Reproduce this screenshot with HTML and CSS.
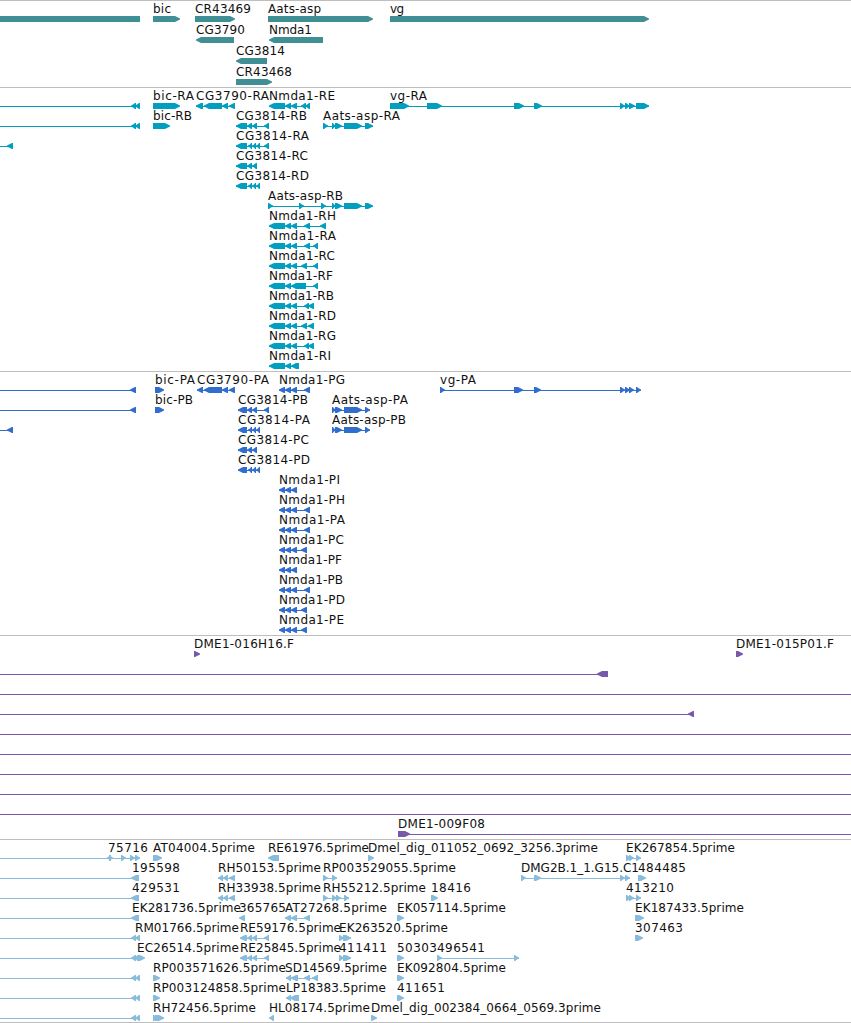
FILE: index.html
```html
<!DOCTYPE html>
<html lang="en">
  <head>
    <meta charset="utf-8">
    <title>Genome tracks</title>
    <link rel="stylesheet" href="styles.css">
  </head>
  <body>
    <div class="browser">
      <section class="track genes" id="genes"></section>
      <section class="track transcripts" id="transcripts"></section>
      <section class="track proteins" id="proteins"></section>
      <section class="track bacs" id="bacs"></section>
      <section class="track ests" id="ests"></section>
    </div>
    <script src="tracks.js"></script>
  </body>
</html>
```
FILE: styles.css
```css
body {
  margin: 0;
  background-color: #ffffff;
}

.browser {
  width: 851px;
  height: 1023px;
  overflow: hidden;
  border-bottom: 1px solid #bebebe;
  box-sizing: border-box;
}

.track {
  border-top: 1px solid #bebebe;
  padding-bottom: 3px;
}

.genes {
  color: #3f8f94;
  padding-bottom: 2px;
}

.transcripts {
  color: #009fbf;
}

.proteins {
  color: #306dcc;
}

.bacs {
  color: #7858a8;
}

.ests {
  color: #88bcdd;
}

.row {
  display: block;
  width: 851px;
  height: 20px;
  overflow: visible;
}

.genes .row {
  height: 21px;
}

.label {
  font-family: "DejaVu Sans", sans-serif;
  font-size: 12px;
  fill: #111111;
}

.exon,
.intron {
  fill: currentColor;
}

.intron {
  shape-rendering: crispEdges;
}
```
FILE: tracks.js
```js
const SVG = "http://www.w3.org/2000/svg";

// exon groups shared by several features
const introns = [[131, 136], [135, 140]];
const cg3790 = [[204, 222], [222, 228], [229, 235]];
const aats = [[332, 336], [335, 342], [344, 362], [365, 373]];
const aatsP = [[332, 336], [335, 342], [344, 362], [365, 370]];
const nmda = [[269, 285], [285, 291], [291, 297]];
const nmdaP = [[279, 285], [285, 291], [291, 297]];
const cgRA = [[236, 247], [248, 252], [252, 256], [256, 260]];
const cgRC = [[236, 247], [247, 252], [252, 257]];
const cgPA = [[238, 247], [248, 252], [252, 256], [256, 260]];
const cgPC = [[238, 247], [247, 252], [252, 257]];
const rh = [[218, 223], [223, 228], [229, 235]];
const re = [[240, 247], [247, 252], [252, 257], [264, 269]];
const ek = [[626, 631], [629, 634], [636, 641]];

// feature: [label, label start, label end, direction, exons, line start, line end]
const tracks = {
  genes: [
    [
      ["", 0, 0, "none", [[0, 140]]],
      ["bic", 153, 171, ">", [[153, 180]]],
      ["CR43469", 195, 251, ">", [[195, 235]]],
      ["Aats-asp", 268, 321, ">", [[268, 373]]],
      ["vg", 390, 404, ">", [[390, 649]]]
    ],
    [
      ["CG3790", 196, 245, "<", [[196, 234]]],
      ["Nmda1", 269, 312, "<", [[269, 323]]]
    ],
    [["CG3814", 236, 285, "<", [[236, 267]]]],
    [["CR43468", 236, 292, ">", [[236, 272]]]]
  ],
  transcripts: [
    [
      ["", 0, 0, "<", introns, 0, 140],
      ["bic-RA", 153, 194, ">", [[153, 180]]],
      ["CG3790-RA", 196, 269, "<", [[196, 203], ...cg3790]],
      ["Nmda1-RE", 269, 335, "<", [...nmda, [301, 306], [305, 310]]],
      ["vg-RA", 390, 427, ">", [[390, 409], [427, 442], [514, 524], [534, 542], [620, 625], [625, 630], [629, 635], [636, 649]]]
    ],
    [
      ["", 0, 0, "<", introns, 0, 140],
      ["bic-RB", 153, 192, ">", [[153, 170]]],
      ["CG3814-RB", 236, 307, "<", [...cgRC, [264, 269]]],
      ["Aats-asp-RA", 323, 400, ">", [[323, 328], ...aats]]
    ],
    [
      ["", 0, 0, "<", [[7, 13]], 0, 13],
      ["CG3814-RA", 236, 309, "<", [...cgRA, [264, 269]]]
    ],
    [["CG3814-RC", 236, 308, "<", cgRC]],
    [["CG3814-RD", 236, 309, "<", cgRA]],
    [["Aats-asp-RB", 268, 343, ">", [[268, 273], [299, 304], [321, 326], ...aats]]],
    [["Nmda1-RH", 269, 336, "<", [...nmda, [304, 310], [320, 326]]]],
    [["Nmda1-RA", 269, 336, "<", [...nmda, [304, 310], [313, 318]]]],
    [["Nmda1-RC", 269, 335, "<", [...nmda, [301, 307], [313, 318]]]],
    [["Nmda1-RF", 269, 333, "<", [[269, 285], [285, 291], [291, 306], [313, 318]]]],
    [["Nmda1-RB", 269, 334, "<", [...nmda, [304, 309], [308, 314]]]],
    [["Nmda1-RD", 269, 336, "<", [...nmda, [301, 307], [308, 314]]]],
    [["Nmda1-RG", 269, 336, "<", [...nmda, [304, 309], [308, 314]]]],
    [["Nmda1-RI", 269, 331, "<", [[269, 285], [285, 291], [291, 299]]]]
  ],
  proteins: [
    [
      ["", 0, 0, "<", [[130, 136]], 0, 136],
      ["bic-PA", 155, 195, ">", [[155, 164]]],
      ["CG3790-PA", 197, 269, "<", [[197, 203], ...cg3790]],
      ["Nmda1-PG", 279, 345, "<", [...nmdaP, [304, 310]]],
      ["vg-PA", 440, 476, ">", [[440, 445], [514, 523], [534, 541], [620, 625], [625, 630], [629, 634], [636, 641]]]
    ],
    [
      ["", 0, 0, "<", [[130, 136]], 0, 136],
      ["bic-PB", 155, 193, ">", [[155, 164]]],
      ["CG3814-PB", 238, 308, "<", [...cgPC, [264, 269]]],
      ["Aats-asp-PA", 332, 408, ">", aatsP]
    ],
    [
      ["", 0, 0, "<", [[7, 13]], 0, 13],
      ["CG3814-PA", 238, 310, "<", cgPA],
      ["Aats-asp-PB", 332, 406, ">", aatsP]
    ],
    [["CG3814-PC", 238, 309, "<", cgPC]],
    [["CG3814-PD", 238, 310, "<", cgPA]],
    [["Nmda1-PI", 279, 340, "<", nmdaP]],
    [["Nmda1-PH", 279, 345, "<", [...nmdaP, [304, 310]]]],
    [["Nmda1-PA", 279, 345, "<", [...nmdaP, [304, 310]]]],
    [["Nmda1-PC", 279, 344, "<", [...nmdaP, [301, 307]]]],
    [["Nmda1-PF", 279, 342, "<", nmdaP]],
    [["Nmda1-PB", 279, 343, "<", [...nmdaP, [304, 310]]]],
    [["Nmda1-PD", 279, 345, "<", [...nmdaP, [301, 307]]]],
    [["Nmda1-PE", 279, 344, "<", [...nmdaP, [301, 307]]]]
  ],
  bacs: [
    [
      ["DME1-016H16.F", 194, 294, ">", [[194, 200]]],
      ["DME1-015P01.F", 736, 834, ">", [[736, 743]]]
    ],
    [["", 0, 0, "<", [[597, 608]], 0, 608]],
    [["", 0, 0, ">", [], 0, 851]],
    [["", 0, 0, "<", [[688, 694]], 0, 694]],
    [["", 0, 0, ">", [], 0, 851]],
    [["", 0, 0, ">", [], 0, 851]],
    [["", 0, 0, ">", [], 0, 851]],
    [["", 0, 0, ">", [], 0, 851]],
    [["", 0, 0, ">", [], 0, 851]],
    [["DME1-009F08", 398, 485, ">", [[398, 410]], 398, 851]]
  ],
  ests: [
    [
      ["", 0, 0, "<", [[107, 111]], 0, 140],
      ["75716", 108, 148, ">", [[109, 113], [121, 126], [130, 135], [135, 140]]],
      ["AT04004.5prime", 153, 255, ">", [[153, 162]]],
      ["RE61976.5prime", 268, 369, "<", [[268, 279]]],
      ["Dmel_dig_011052_0692_3256.3prime", 368, 598, ">", [[368, 374]]],
      ["EK267854.5prime", 626, 735, ">", ek]
    ],
    [
      ["195598", 132, 180, "<", [[131, 139]], 0, 139],
      ["RH50153.5prime", 218, 321, "<", rh],
      ["RP003529055.5prime", 323, 456, ">", [[323, 328], [332, 337]]],
      ["DMG2B.1_1.G15.C1", 521, 639, ">", [[521, 526], [534, 541], [620, 625], [625, 630]]],
      ["484485", 638, 686, ">", [[638, 646]]]
    ],
    [
      ["429531", 132, 180, "<", [[131, 139]], 0, 139],
      ["RH33938.5prime", 218, 321, "<", rh],
      ["RH55212.5prime", 323, 426, ">", [[323, 328], [332, 337], [336, 341], [344, 349]]],
      ["18416", 431, 471, ">", [[431, 438]]],
      ["413210", 626, 674, ">", ek]
    ],
    [
      ["EK281736.5prime", 132, 241, "<", [[131, 139]], 0, 139],
      ["365765", 239, 286, "<", [[239, 245]]],
      ["AT27268.5prime", 285, 387, "<", [[285, 291], [291, 297], [304, 310]]],
      ["EK057114.5prime", 397, 506, ">", [[397, 404]]],
      ["EK187433.5prime", 635, 744, ">", [[635, 644]]]
    ],
    [
      ["RM01766.5prime", 135, 239, "<", introns, 0, 140],
      ["RE59176.5prime", 240, 341, "<", re],
      ["EK263520.5prime", 339, 448, ">", [[339, 344], [343, 351]]],
      ["307463", 635, 683, ">", [[635, 643]]]
    ],
    [
      ["", 0, 0, "<", [[131, 136], [134, 139]], 0, 139],
      ["EC26514.5prime", 137, 239, ">", [[137, 145]]],
      ["RE25845.5prime", 240, 341, "<", re],
      ["411411", 339, 387, ">", [[339, 344], [343, 351]]],
      ["50303", 397, 437, ">", [[397, 404]]],
      ["496541", 437, 485, ">", [[437, 442], [514, 519]]]
    ],
    [
      ["", 0, 0, "<", introns, 0, 139],
      ["RP003571626.5prime", 153, 286, ">", [[153, 160]]],
      ["SD14569.5prime", 285, 387, "<", [[286, 291], [291, 298], [304, 310], [312, 318]]],
      ["EK092804.5prime", 397, 506, ">", [[397, 404]]]
    ],
    [
      ["", 0, 0, "<", introns, 0, 139],
      ["RP003124858.5prime", 153, 286, ">", [[153, 160]]],
      ["LP18383.5prime", 286, 386, "<", [[286, 291], [290, 299]]],
      ["411651", 397, 445, ">", [[397, 404]]]
    ],
    [
      ["", 0, 0, "<", introns, 0, 139],
      ["RH72456.5prime", 153, 256, ">", [[153, 158], [155, 164]]],
      ["HL08174.5prime", 269, 370, "<", [[269, 274]]],
      ["Dmel_dig_002384_0664_0569.3prime", 371, 601, ">", [[371, 377]]]
    ]
  ]
};

function add(parent, name, attrs) {
  const el = document.createElementNS(SVG, name);
  for (const key in attrs) {
    el.setAttribute(key, attrs[key]);
  }
  parent.appendChild(el);
  return el;
}

function exonPoints(a, b, dir) {
  const tip = Math.min(6, b - a);
  if (dir === ">") {
    return `${a},15 ${b - tip + 1},15 ${b - 2},16.5 ${b},17.5 ${b},18.5 ${b - 2},19.5 ${b - tip + 1},21 ${a},21`;
  }
  if (dir === "<") {
    return `${b},15 ${a + tip - 1},15 ${a + 2},16.5 ${a},17.5 ${a},18.5 ${a + 2},19.5 ${a + tip - 1},21 ${b},21`;
  }
  return `${a},15 ${b},15 ${b},21 ${a},21`;
}

function drawFeature(svg, feature) {
  const [label, x, end, dir, exons] = feature;
  const from = feature[5] ?? exons[0][0];
  const to = feature[6] ?? exons[exons.length - 1][1];
  if (exons.length > 1 || feature.length > 5) {
    add(svg, "rect", { class: "intron", x: from, y: 18, width: to - from, height: 1 });
  }
  exons.forEach(([a, b]) => {
    add(svg, "polygon", { class: "exon", points: exonPoints(a, b, dir) });
  });
  if (label) {
    add(svg, "text", { class: "label", x: x, y: 12, textLength: end - x }).textContent = label;
  }
}

for (const id in tracks) {
  const section = document.getElementById(id);
  tracks[id].forEach((row) => {
    const svg = add(section, "svg", { class: "row" });
    row.forEach((feature) => drawFeature(svg, feature));
  });
}
```
